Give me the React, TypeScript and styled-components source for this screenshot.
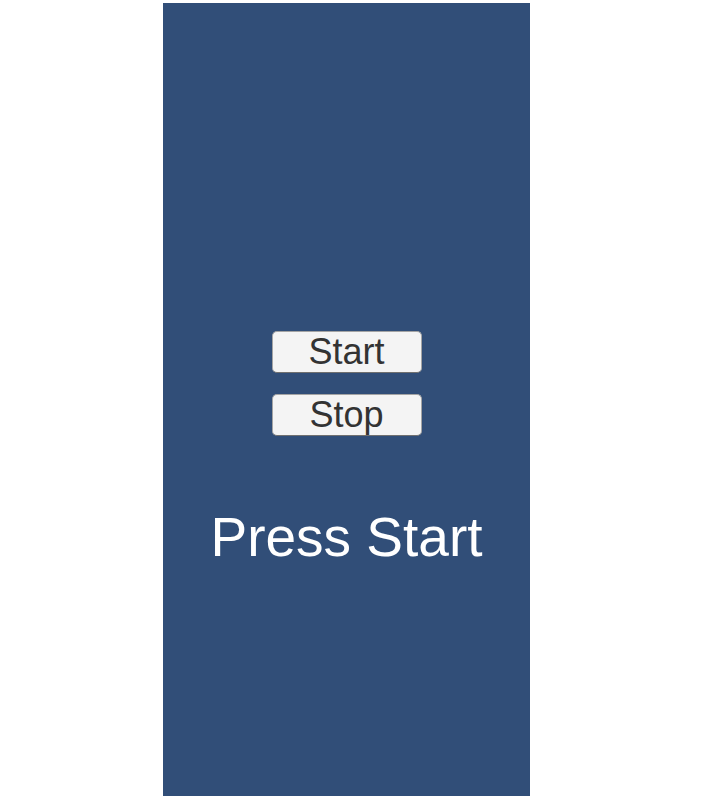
import React from "react";
import styled, { createGlobalStyle } from "styled-components";

const GlobalStyle = createGlobalStyle`
  html, body {
    margin: 0;
    padding: 0;
    background: #ffffff;
  }
  body {
    font-family: "Liberation Sans", Arial, sans-serif;
  }
`;

const Page = styled.div`
  display: flex;
  padding: 3px 0 0 163px;
`;

const Panel = styled.div`
  display: flex;
  flex-direction: column;
  align-items: center;
  box-sizing: border-box;
  width: 367px;
  height: 793px;
  padding-top: 328px;
  background: #314e78;
`;

const ButtonStack = styled.div`
  display: flex;
  flex-direction: column;
  gap: 21px;
`;

const Button = styled.button`
  display: flex;
  align-items: center;
  justify-content: center;
  box-sizing: border-box;
  width: 150px;
  height: 42px;
  padding: 0 0 1px;
  border: 1px solid #a4a4a4;
  border-bottom-color: #707070;
  border-radius: 5px;
  background: #f4f4f4;
  color: #333333;
  font-family: "Liberation Sans", Arial, sans-serif;
  font-size: 36px;
  line-height: 1;
  cursor: pointer;
`;

const Status = styled.p`
  margin: 70px 0 0;
  color: #ffffff;
  font-size: 55px;
  line-height: 62px;
  white-space: nowrap;
`;

const App: React.FC = () => {
  return (
    <>
      <GlobalStyle />
      <Page>
        <Panel>
          <ButtonStack>
            <Button>Start</Button>
            <Button>Stop</Button>
          </ButtonStack>
          <Status>Press Start</Status>
        </Panel>
      </Page>
    </>
  );
};

export default App;
